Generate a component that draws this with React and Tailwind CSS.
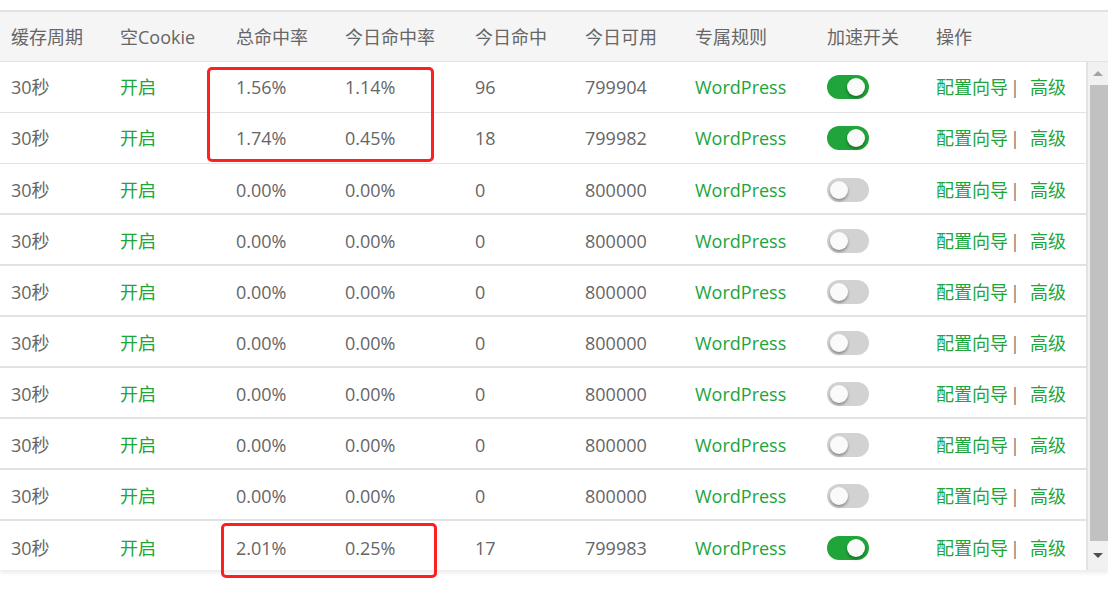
import React from 'react';

const cols = [
  { key: 'period', label: '缓存周期', w: 'w-[109px]' },
  { key: 'cookie', label: '空Cookie', w: 'w-[116px]' },
  { key: 'total', label: '总命中率', w: 'w-[109px]' },
  { key: 'today', label: '今日命中率', w: 'w-[130px]' },
  { key: 'hits', label: '今日命中', w: 'w-[110px]' },
  { key: 'avail', label: '今日可用', w: 'w-[110px]' },
  { key: 'rule', label: '专属规则', w: 'w-[132px]' },
  { key: 'on', label: '加速开关', w: 'w-[109px]' },
  { key: 'ops', label: '操作', w: 'flex-1' },
];

const rows = [
  { total: '1.56%', today: '1.14%', hits: '96', avail: '799904', on: true },
  { total: '1.74%', today: '0.45%', hits: '18', avail: '799982', on: true },
  { total: '0.00%', today: '0.00%', hits: '0', avail: '800000', on: false },
  { total: '0.00%', today: '0.00%', hits: '0', avail: '800000', on: false },
  { total: '0.00%', today: '0.00%', hits: '0', avail: '800000', on: false },
  { total: '0.00%', today: '0.00%', hits: '0', avail: '800000', on: false },
  { total: '0.00%', today: '0.00%', hits: '0', avail: '800000', on: false },
  { total: '0.00%', today: '0.00%', hits: '0', avail: '800000', on: false },
  { total: '0.00%', today: '0.00%', hits: '0', avail: '800000', on: false },
  { total: '2.01%', today: '0.25%', hits: '17', avail: '799983', on: true },
];

function Toggle({ on }) {
  return (
    <div
      className={`relative w-[42px] h-[24px] rounded-full ${
        on ? 'bg-[#20a53a]' : 'bg-[#d2d2d2]'
      }`}
    >
      <div
        className={`absolute top-[3px] w-[18px] h-[18px] rounded-full bg-[#fafafa] shadow-[0_2px_3px_rgba(0,0,0,0.35)] ${
          on ? 'right-[4px]' : 'left-[3px]'
        }`}
      />
    </div>
  );
}

function Cell({ w, children }) {
  return <div className={`${w} shrink-0 pl-[11px] flex items-center`}>{children}</div>;
}

// first two rows: thin divider; the rest: 2px divider, last one cut short by the scroll area
function rowClass(i) {
  if (i < 2) return 'h-[51.2px] border-b border-[#e2e2e2]';
  if (i < 9) return 'h-[51px] pt-[3px] border-b-2 border-[#e2e2e2]';
  return 'h-[49px] pt-[5px]';
}

export default function App() {
  return (
    <div className="w-[1108px] h-[601px] bg-white pt-[10px] text-[18px] text-[#666] font-['Open_Sans','Noto_Sans_CJK_SC',sans-serif]">
      <div className="relative shadow-[0_3px_4px_rgba(0,0,0,0.08)]">
        <div className="flex h-[52px] pt-[1px] bg-[#f5f5f5] border-t-2 border-b border-[#e2e2e2]">
          {cols.map((c) => (
            <Cell key={c.key} w={c.w}>{c.label}</Cell>
          ))}
        </div>

        <div className="flex">
          <div className="w-[1088px] border-r-2 border-[#e2e2e2]">
            {rows.map((r, i) => (
              <div key={i} className={`flex ${rowClass(i)}`}>
                <Cell w="w-[109px]">30秒</Cell>
                <Cell w="w-[116px]"><span className="text-[#20a53a]">开启</span></Cell>
                <Cell w="w-[109px]">{r.total}</Cell>
                <Cell w="w-[130px]">{r.today}</Cell>
                <Cell w="w-[110px]">{r.hits}</Cell>
                <Cell w="w-[110px]">{r.avail}</Cell>
                <Cell w="w-[132px]"><span className="text-[#20a53a]">WordPress</span></Cell>
                <Cell w="w-[109px]"><Toggle on={r.on} /></Cell>
                <Cell w="flex-1">
                  <span className="text-[#20a53a]">配置向导</span>
                  <span className="text-[#777] ml-[2px] mr-[10px]">|</span>
                  <span className="text-[#20a53a]">高级</span>
                </Cell>
              </div>
            ))}
          </div>

          <div className="flex-1 bg-[#f1f1f1] flex flex-col items-center">
            <div className="h-[22px] w-full flex items-center justify-center">
              <div className="w-0 h-0 border-l-[5px] border-r-[5px] border-b-[5px] border-l-transparent border-r-transparent border-b-[#a3a3a3]" />
            </div>
            <div className="w-full pl-[2px] mt-[1px]">
              <div className="h-[456px] bg-[#c1c1c1]" />
            </div>
            <div className="flex-1 w-full flex items-center justify-center">
              <div className="w-0 h-0 border-l-[5px] border-r-[5px] border-t-[5px] border-l-transparent border-r-transparent border-t-[#505050]" />
            </div>
          </div>
        </div>

        <div className="absolute left-[207px] top-[57px] w-[227px] h-[95px] border-[3.5px] border-[#ff1f1f] rounded-[5px] pointer-events-none" />
        <div className="absolute left-[221px] top-[513px] w-[216px] h-[55px] border-[3.5px] border-[#ff1f1f] rounded-[5px] pointer-events-none" />
      </div>
    </div>
  );
}
